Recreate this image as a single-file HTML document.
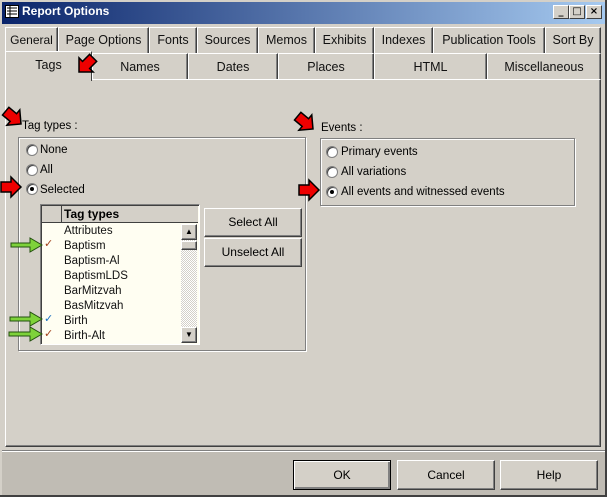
<!DOCTYPE html>
<html><head><style>
*{box-sizing:border-box}
body{margin:0;width:607px;height:497px;background:#d4d0c8;font-family:Tahoma,"DejaVu Sans","Liberation Sans",sans-serif;font-size:11px;position:relative;overflow:hidden;color:#000}
.a{position:absolute}
.title{left:0;top:0;width:607px;height:24px;background:linear-gradient(90deg,#0a246a,#a6caf0);border:2px solid #d4d0c8;border-bottom:none}
.tt{left:22px;top:4px;color:#fff;font-weight:bold;font-size:12px;font-family:"Liberation Sans",sans-serif}
.wb{top:5px;width:16px;height:14px;background:#d4d0c8;border:1px solid;border-color:#fff #404040 #404040 #fff;font-size:10px;text-align:center;line-height:11px;font-weight:bold}
.tab{height:27px;border:1px solid;border-color:#fff #404040 transparent #fff;box-shadow:inset -1px 0 #808080;text-align:center;line-height:24px;font-family:"Liberation Sans",sans-serif;font-size:12.5px;color:#111}
.tab2{line-height:26px}
.panel{left:5px;top:79px;width:596px;height:368px;border:1px solid;border-color:#fff #404040 #404040 #fff;box-shadow:inset -1px -1px #808080}
.grp{border:1px solid #808080;box-shadow:1px 1px #fff,inset 1px 1px #fff}
.lbl{font-family:"Liberation Sans",sans-serif;font-size:11.5px}
.rad{width:12px;height:12px;border-radius:50%;background:#fff;border:1px solid #808080;box-shadow:inset 1px 1px #404040}
.dot{position:absolute;left:3px;top:3px;width:4px;height:4px;border-radius:50%;background:#000}
.btn{background:#d4d0c8;border:1px solid;border-color:#fff #404040 #404040 #fff;box-shadow:inset -1px -1px #808080;text-align:center;font-family:"Liberation Sans",sans-serif;font-size:12px}
.row{left:64px;font-family:"Liberation Sans",sans-serif;font-size:11.5px;color:#111}
</style></head><body>
<div class="a title"></div>
<svg class="a" style="left:5px;top:5px" width="14" height="13"><rect x="0.5" y="0.5" width="13" height="12" fill="#fff" stroke="#000"/><path d="M2 3H12M2 6H12M2 9H12M5 1V12" stroke="#000"/></svg>
<div class="a tt">Report Options</div>
<div class="a wb" style="left:553px">_</div>
<div class="a wb" style="left:569px">□</div>
<div class="a wb" style="left:586px">×</div>

<div class="a tab" style="left:5px;top:27px;width:53px;font-size:12px">General</div>
<div class="a tab" style="left:58px;top:27px;width:91px">Page Options</div>
<div class="a tab" style="left:149px;top:27px;width:48px">Fonts</div>
<div class="a tab" style="left:197px;top:27px;width:61px">Sources</div>
<div class="a tab" style="left:258px;top:27px;width:57px">Memos</div>
<div class="a tab" style="left:315px;top:27px;width:59px">Exhibits</div>
<div class="a tab" style="left:374px;top:27px;width:59px">Indexes</div>
<div class="a tab" style="left:433px;top:27px;width:112px">Publication Tools</div>
<div class="a tab" style="left:545px;top:27px;width:56px">Sort By</div>

<div class="a tab tab2" style="left:5px;top:51px;width:87px;height:30px;background:#d4d0c8;line-height:26px;z-index:2;border-bottom:none;box-shadow:none">Tags</div>
<div class="a tab tab2" style="left:92px;top:53px;width:96px">Names</div>
<div class="a tab tab2" style="left:188px;top:53px;width:90px">Dates</div>
<div class="a tab tab2" style="left:278px;top:53px;width:96px">Places</div>
<div class="a tab tab2" style="left:374px;top:53px;width:113px">HTML</div>
<div class="a tab tab2" style="left:487px;top:53px;width:114px">Miscellaneous</div>
<div class="a panel"></div>

<div class="a lbl" style="left:22px;top:120px">Tag types :</div>
<div class="a grp" style="left:18px;top:137px;width:288px;height:214px"></div>
<div class="a rad" style="left:26px;top:144px"></div><div class="a lbl" style="left:40px;top:144px">None</div>
<div class="a rad" style="left:26px;top:164px"></div><div class="a lbl" style="left:40px;top:164px">All</div>
<div class="a rad" style="left:26px;top:183px"><div class="dot"></div></div><div class="a lbl" style="left:40px;top:184px">Selected</div>

<div class="a" style="left:40px;top:204px;width:160px;height:141px;background:#fffef2;border:1px solid;border-color:#808080 #fff #fff #808080;box-shadow:inset 1px 1px #404040"></div>
<div class="a" style="left:42px;top:206px;width:156px;height:17px;background:#d4d0c8;border-bottom:1px solid #404040"></div>
<div class="a" style="left:61px;top:206px;width:1px;height:17px;background:#404040"></div>
<div class="a" style="left:64px;top:207px;font-weight:bold;font-family:'Liberation Sans',sans-serif;font-size:12px">Tag types</div>
<div class="a row" style="top:225px">Attributes</div>
<div class="a row" style="top:240px">Baptism</div>
<div class="a row" style="top:255px">Baptism-Al</div>
<div class="a row" style="top:270px">BaptismLDS</div>
<div class="a row" style="top:285px">BarMitzvah</div>
<div class="a row" style="top:300px">BasMitzvah</div>
<div class="a row" style="top:315px">Birth</div>
<div class="a row" style="top:330px">Birth-Alt</div>
<div class="a" style="left:44px;top:237px;color:#a0401a;font-size:11px">✓</div>
<div class="a" style="left:44px;top:312px;color:#1a70c0;font-size:11px">✓</div>
<div class="a" style="left:44px;top:327px;color:#a0401a;font-size:11px">✓</div>
<div class="a" style="left:181px;top:224px;width:16px;height:119px;background:repeating-conic-gradient(#d4d0c8 0 25%,#fff 0 50%) 0 0/2px 2px"></div>
<div class="a btn" style="left:181px;top:224px;width:16px;height:16px;font-size:8px;line-height:14px">▲</div>
<div class="a btn" style="left:181px;top:241px;width:16px;height:9px"></div>
<div class="a btn" style="left:181px;top:327px;width:16px;height:16px;font-size:8px;line-height:14px">▼</div>
<div class="a btn" style="left:204px;top:208px;width:98px;height:29px;line-height:26px">Select All</div>
<div class="a btn" style="left:204px;top:238px;width:98px;height:29px;line-height:26px">Unselect All</div>

<div class="a lbl" style="left:321px;top:122px">Events :</div>
<div class="a grp" style="left:320px;top:138px;width:255px;height:68px"></div>
<div class="a rad" style="left:326px;top:146px"></div><div class="a lbl" style="left:341px;top:146px">Primary events</div>
<div class="a rad" style="left:326px;top:166px"></div><div class="a lbl" style="left:341px;top:166px">All variations</div>
<div class="a rad" style="left:326px;top:186px"><div class="dot"></div></div><div class="a lbl" style="left:341px;top:186px">All events and witnessed events</div>

<svg class="a" style="left:0;top:0;z-index:5" width="607" height="497">
<defs><path id="ar" d="M0 0L-10 -10V-5H-20V5H-10V10Z"/></defs>
<g fill="#e00" stroke="#000" stroke-width="1.5">
<use href="#ar" transform="translate(79,72) rotate(135)"/>
<use href="#ar" transform="translate(21,124) rotate(40)"/>
<use href="#ar" transform="translate(313,129) rotate(40)"/>
<use href="#ar" transform="translate(21,187)"/>
<use href="#ar" transform="translate(319,190)"/>
</g>
<g fill="#7ed23a" stroke="#235010" stroke-width="1">
<path d="M11 243H30V238L42 245L30 252V247H11Z"/>
<path d="M10 317H30V312L42 319L30 326V321H10Z"/>
<path d="M9 332H30V327L42 334L30 341V336H9Z"/>
</g>
</svg>

<div class="a" style="left:2px;top:450px;width:603px;height:2px;border-top:1px solid #808080;border-bottom:1px solid #fff"></div>
<div class="a" style="left:2px;top:452px;width:603px;height:43px;background:#c0bcb4"></div>
<div class="a btn" style="left:293px;top:460px;width:98px;height:30px;line-height:28px;border:1px solid #000;box-shadow:inset 1px 1px #fff,inset -2px -2px #808080">OK</div>
<div class="a btn" style="left:397px;top:460px;width:98px;height:30px;line-height:28px">Cancel</div>
<div class="a btn" style="left:500px;top:460px;width:98px;height:30px;line-height:28px">Help</div>
<div class="a" style="left:0;top:495px;width:607px;height:2px;background:#404040"></div>
<div class="a" style="left:605px;top:0;width:2px;height:497px;background:#404040"></div>
</body></html>
